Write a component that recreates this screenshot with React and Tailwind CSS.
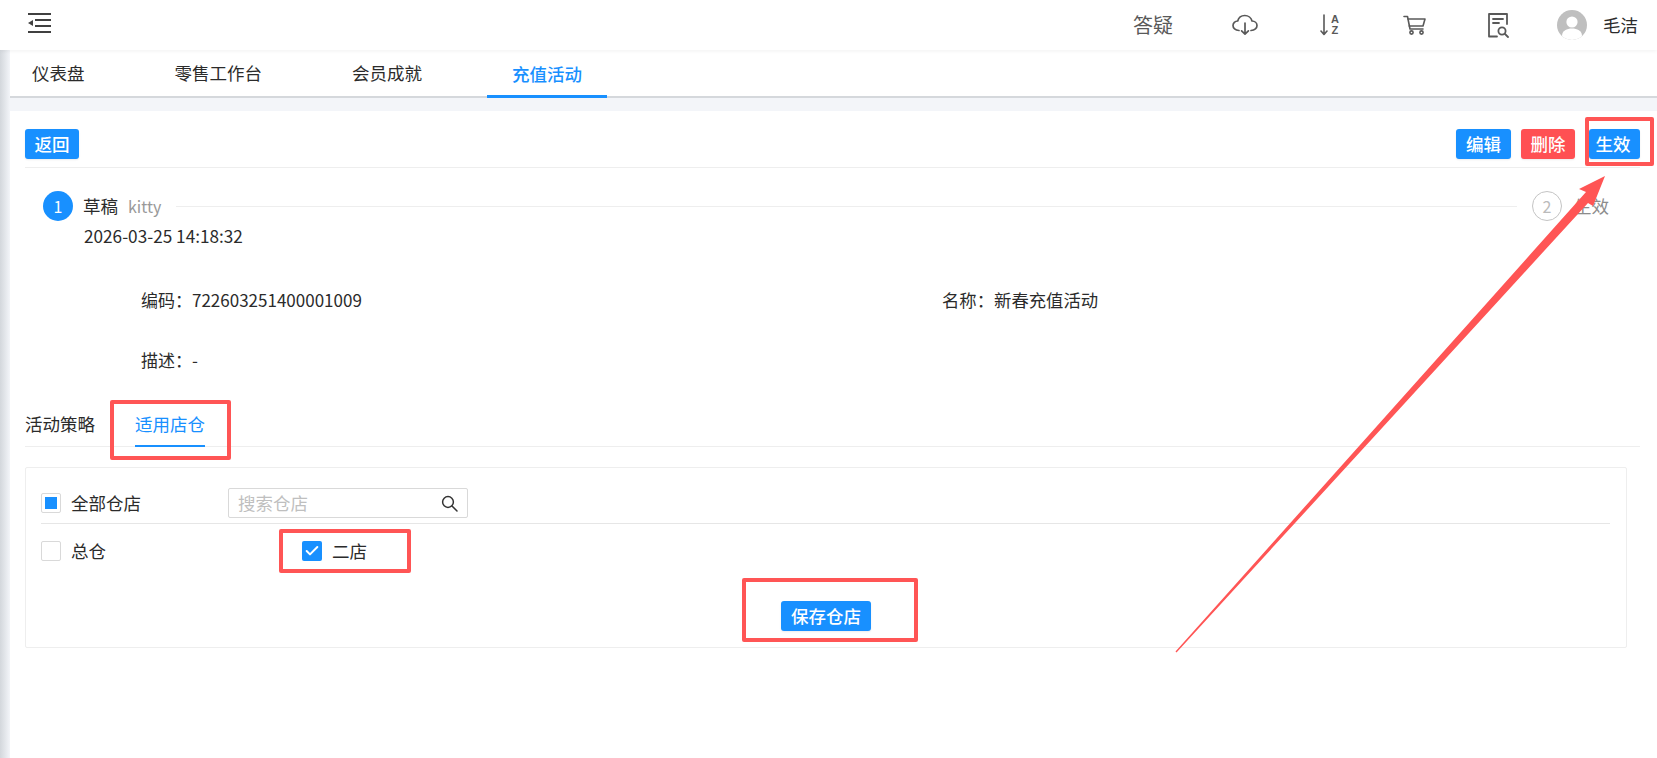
import React from "react";
import { Check } from "lucide-react";

const font = { fontFamily: '"Noto Sans CJK SC", "Noto Sans", sans-serif' };

function Btn({ children, red, className = "" }) {
  return (
    <button className={`h-[30px] rounded-[3px] text-white text-[17.5px] leading-[30px] font-medium shadow-[0_1px_2px_rgba(0,0,0,0.08)] ${red ? "bg-[#ff5053]" : "bg-[#1890ff]"} ${className}`}>
      {children}
    </button>
  );
}

function Box({ className = "", children }) {
  return <div className={`w-[20px] h-[20px] rounded-[2px] flex items-center justify-center ${className}`}>{children}</div>;
}

function RedBox({ className }) {
  return <div className={`absolute border-[4px] border-[#ff5555] rounded-[2px] pointer-events-none ${className}`} />;
}

export default function App() {
  return (
    <div style={font} className="relative w-[1657px] h-[758px] overflow-hidden bg-white text-[17.5px] leading-[24px] text-[#2b2b2b]">
      {/* header */}
      <header className="relative z-10 h-[50px] bg-white flex items-center shadow-[0_1px_4px_rgba(0,0,0,0.06)] text-[#595959]">
        <svg width="24" height="20" viewBox="0 0 24 20" className="ml-[28px] mb-[5px]" fill="#404040">
          <rect x="0" y="0" width="23" height="2" />
          <rect x="7" y="6" width="16" height="2" />
          <rect x="7" y="12" width="16" height="2" />
          <rect x="0" y="18" width="23" height="2" />
          <path d="M5 7 L0 10 L5 13 Z" />
        </svg>
        <span className="ml-[1081px] text-[20px] w-[40px] whitespace-nowrap">答疑</span>
        <svg width="26" height="22" viewBox="0 0 26 22" className="ml-[59px]" fill="none" stroke="#595959" strokeWidth="1.7" strokeLinecap="round" strokeLinejoin="round">
          <path d="M7 16.5 C3.2 16.5 1 14 1 11.5 C1 9 3 7 5.7 7 C6.6 3.5 9.3 1.5 12.8 1.5 C16.3 1.5 19.3 4 20 7 C22.7 7 25 9 25 11.5 C25 14 22.8 16.5 19 16.5" />
          <path d="M13 9 V20 M9.6 16.8 L13 20.2 L16.4 16.8" />
        </svg>
        <div className="ml-[62px] flex items-center w-[20px] h-[24px]">
          <svg width="8" height="22" viewBox="0 0 8 22" fill="none" stroke="#595959" strokeWidth="1.6" strokeLinecap="round" strokeLinejoin="round">
            <path d="M4 1 V20 M1 17 L4 20.5 L7 17" />
          </svg>
          <div className="ml-[3px] flex flex-col items-center text-[11px] leading-[11px] font-bold text-[#595959]" style={{ fontFamily: '"Liberation Sans", sans-serif' }}>
            <span>A</span>
            <span>Z</span>
          </div>
        </div>
        <svg width="23" height="20" viewBox="0 0 23 20" className="ml-[63px]" fill="none" stroke="#595959" strokeWidth="1.6" strokeLinecap="round" strokeLinejoin="round">
          <path d="M1 1.5 H4.5 L7 14 H20" />
          <path d="M5 4 H22 L20 11 H6.2" />
          <circle cx="8.5" cy="17.5" r="1.6" />
          <circle cx="18.5" cy="17.5" r="1.6" />
        </svg>
        <svg width="21" height="25" viewBox="0 0 21 25" className="ml-[62px]" fill="none" stroke="#595959" strokeWidth="1.8" strokeLinecap="round" strokeLinejoin="round">
          <path d="M9 23.5 H1 V1 H19 V11" />
          <path d="M5 6 H15 M5 10 H11" />
          <circle cx="14" cy="18" r="3.6" />
          <path d="M17 21 L20 24" />
        </svg>
        <div className="ml-[48px] w-[30px] h-[30px] rounded-full bg-[#bfbfbf] overflow-hidden shrink-0">
          <svg width="30" height="30" viewBox="0 0 30 30" fill="#fff">
            <circle cx="15" cy="12" r="5.6" />
            <path d="M5 26 C5 20.5 10 18.5 15 18.5 C20 18.5 25 20.5 25 26 L25 30 L5 30 Z" />
          </svg>
        </div>
        <span className="ml-[16px] text-[17.5px] text-[#2b2b2b] whitespace-nowrap">毛洁</span>
      </header>

      {/* main tabs */}
      <nav className="h-[48px] flex items-stretch bg-white border-b-2 border-[#d5d8dc]">
        <a className="ml-[32px] flex items-center">仪表盘</a>
        <a className="ml-[90px] flex items-center">零售工作台</a>
        <a className="ml-[90px] flex items-center">会员成就</a>
        <a className="ml-[65px] w-[120px] h-[48px] flex items-center justify-center font-medium text-[#1890ff] border-b-[3px] border-[#1890ff] pt-[3px]">充值活动</a>
      </nav>

      {/* body */}
      <div className="h-[660px] bg-[#f3f5f9] pt-[13px] pl-[10px]">
        <div className="h-full bg-white pl-[15px] pr-[17px]">
          <div className="pt-[18px] pb-[8px] border-b border-[#eeeeee] flex items-center h-[57px]">
            <Btn className="w-[54px]">返回</Btn>
            <div className="flex-1" />
            <Btn className="w-[55px]">编辑</Btn>
            <Btn red className="w-[54px] ml-[10px]">删除</Btn>
            <Btn className="w-[51px] ml-[14px] pr-[3px]">生效</Btn>
          </div>

          {/* steps */}
          <div className="mt-[23px] ml-[18px] mr-[31px] flex items-center h-[30px]">
            <div className="w-[30px] h-[30px] rounded-full bg-[#1890ff] text-white text-[16px] flex items-center justify-center">1</div>
            <span className="ml-[10px]">草稿</span>
            <span className="ml-[10px] text-[16px] text-[#999999]">kitty</span>
            <div className="ml-[15px] flex-1 h-px bg-[#eeeeee]" />
            <div className="ml-[15px] w-[30px] h-[30px] rounded-full border border-[#c4c4c4] text-[#bbbbbb] text-[16px] flex items-center justify-center">2</div>
            <span className="ml-[12px] text-[#8c8c8c]">生效</span>
          </div>
          <div className="mt-[3px] ml-[59px] text-[17.2px]">2026-03-25 14:18:32</div>

          {/* info */}
          <div className="mt-[40px] ml-[116px] flex">
            <div className="w-[801px] text-[17px]">编码：722603251400001009</div>
            <div className="text-[17.35px]">名称：新春充值活动</div>
          </div>
          <div className="mt-[36px] ml-[116px] text-[17px]">描述：-</div>

          {/* sub tabs */}
          <div className="mt-[40px] flex border-b border-[#eeeeee] h-[35px]">
            <span className="w-[110px]">活动策略</span>
            <span className="w-[70px] h-[35px] whitespace-nowrap text-[#1890ff] border-b-2 border-[#1890ff]">适用店仓</span>
          </div>

          {/* panel */}
          <div className="mt-[20px] w-[1602px] h-[181px] border border-[#eeeeee] rounded-[2px] pt-[20px] px-[15px]">
            <div className="flex items-center h-[30px]">
              <Box className="border border-[#d9d9d9]">
                <div className="w-[12px] h-[12px] bg-[#1890ff]" />
              </Box>
              <span className="ml-[10px] w-[157px]">全部仓店</span>
              <div className="w-[240px] h-[30px] border border-[#d9d9d9] rounded-[2px] flex items-center pl-[9px] pr-[9px]">
                <input placeholder="搜索仓店" className="flex-1 min-w-0 outline-none placeholder:text-[#bfbfbf]" />
                <svg width="17" height="17" viewBox="0 0 17 17" fill="none" stroke="#333" strokeWidth="1.5" strokeLinecap="round">
                  <circle cx="7" cy="7" r="5.4" />
                  <path d="M11 11 L16 16" />
                </svg>
              </div>
            </div>
            <div className="h-px bg-[#e6e6e6] mt-[5px] mr-[1px]" />
            <div className="flex items-center mt-[17px] h-[20px]">
              <Box className="border border-[#d9d9d9]" />
              <span className="ml-[10px] w-[231px]">总仓</span>
              <Box className="bg-[#1890ff]">
                <Check size={16} strokeWidth={3} className="text-white" />
              </Box>
              <span className="ml-[10px]">二店</span>
            </div>
            <div className="flex justify-center mt-[40px]">
              <Btn className="w-[90px]">保存仓店</Btn>
            </div>
          </div>
        </div>
      </div>

      {/* left sidebar shadow */}
      <div className="absolute left-0 top-[50px] bottom-0 w-[10px] bg-gradient-to-r from-[#d3d7dc] to-[#f3f5f9] pointer-events-none" />

      {/* annotations */}
      <RedBox className="left-[1585px] top-[117px] w-[69px] h-[49px]" />
      <RedBox className="left-[110px] top-[400px] w-[121px] h-[60px]" />
      <RedBox className="left-[279px] top-[529px] w-[132px] h-[44px]" />
      <RedBox className="left-[742px] top-[578px] w-[176px] h-[64px]" />
      <svg className="absolute inset-0 pointer-events-none" width="1657" height="758" viewBox="0 0 1657 758">
        <polygon points="1175.5,651.5 1586,192 1579,189 1605,176 1593,206 1588,203 1176.5,652.5" fill="#ff5555" />
      </svg>
    </div>
  );
}
